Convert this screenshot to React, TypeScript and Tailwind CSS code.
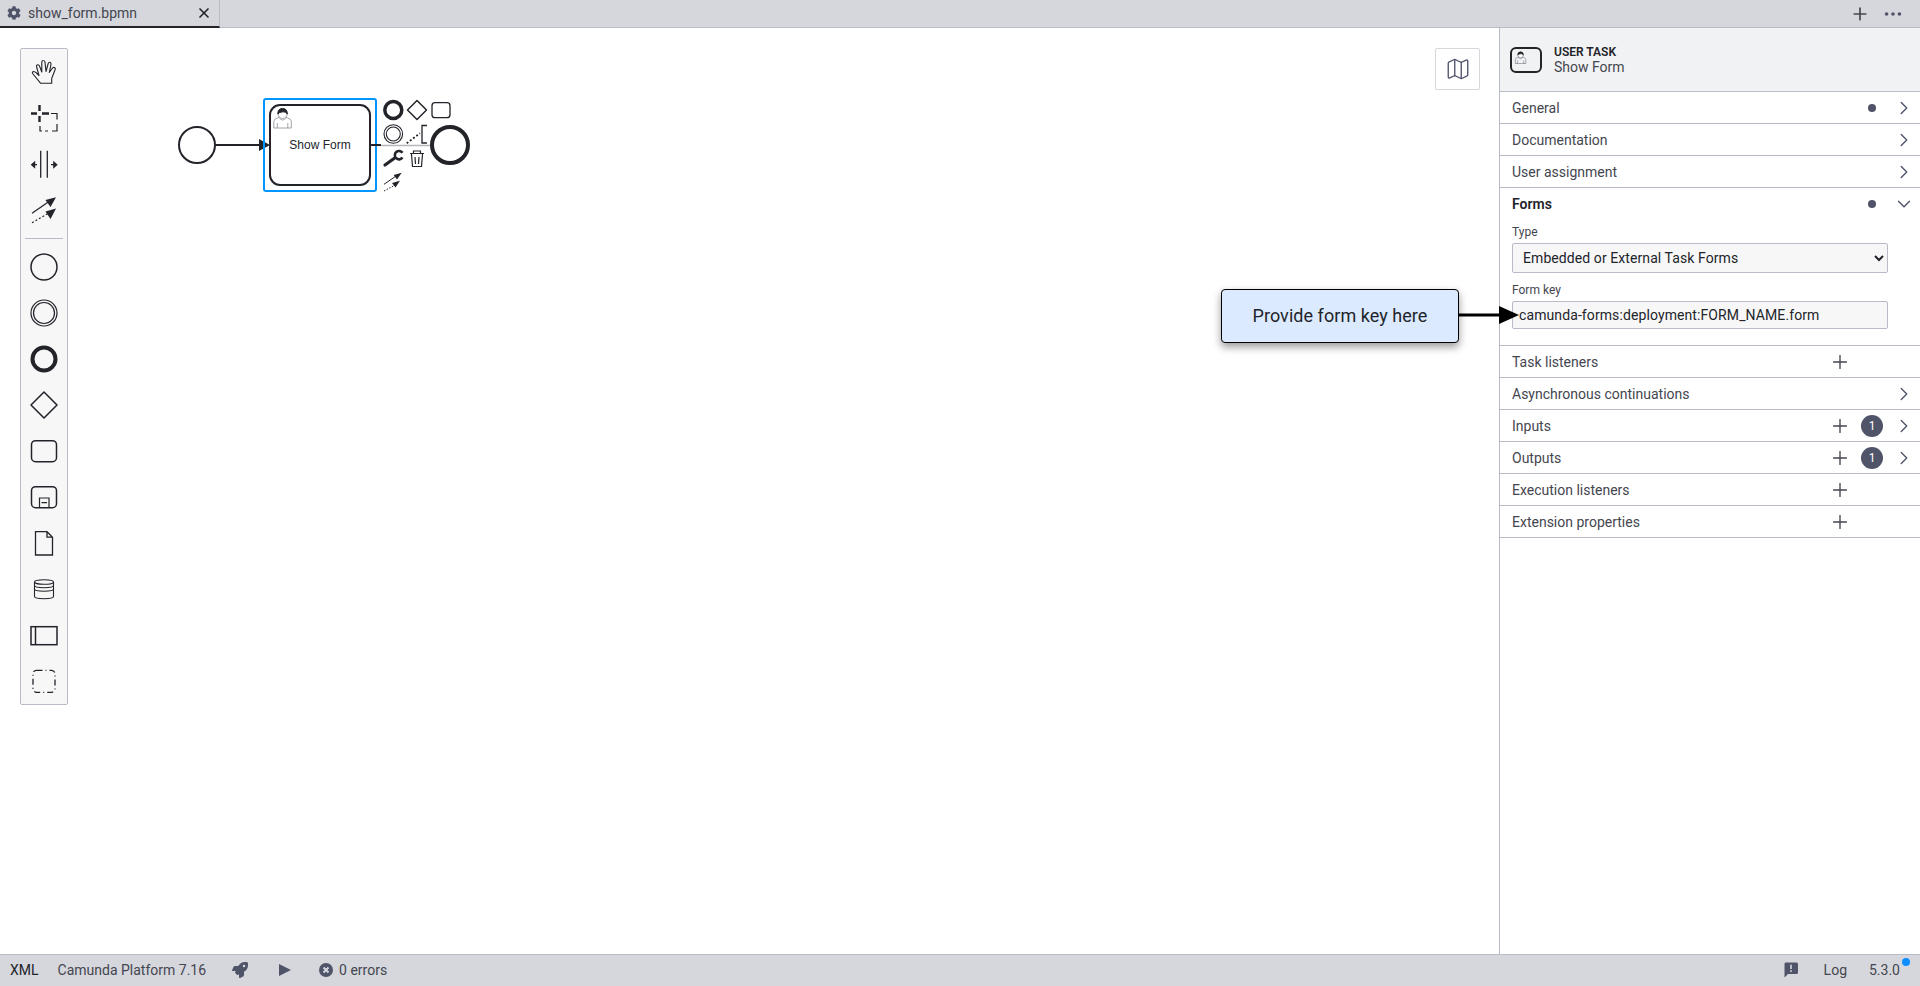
import React from "react";
import { ChevronDown, ChevronRight, Ellipsis, Map as MapIcon, Plus, X } from "lucide-react";
import { FaCog, FaRocket } from "react-icons/fa";

const stroke = "#22242a";

const Tool = ({ children }: { children: React.ReactNode }) => (
  <svg width="46" height="46" viewBox="0 0 46 46" fill="none" stroke={stroke} strokeWidth="1.5">
    {children}
  </svg>
);

const paletteTop = [
  <path
    key="hand"
    strokeWidth="1.1"
    strokeLinejoin="round"
    d="M19.7 34.3L12 25Q10.5 23 12.5 22.5Q14 22.5 15.5 24L18 26.5L15.5 17.5Q15.5 15.5 17 15.7Q18.3 16 18.7 17.5L20.8 23V13Q21 11.3 22.3 11.5Q23.7 11.5 24 13L25 22.5L27.2 14.5Q27.8 13 29 13.3Q30.2 13.8 30 15.3L28.3 23.5L31.5 19Q32.5 17.8 33.8 18.7Q34.8 19.5 34 21L30.7 29.5V34.3Z"
  />,
  <g key="lasso">
    <path strokeWidth="2.4" d="M18.5 10v6M18.5 21v6M10 18.5h6M21 18.5h7" />
    <path strokeWidth="1.2" d="M30 18.5h6v6M36 29v7h-5M27 36h-3M19 31v5h2" />
  </g>,
  <g key="space">
    <path strokeWidth="1.3" d="M19.7 9.7v27M26.3 9.7v27M11 23.7h5M30 23.7h5" />
    <path fill={stroke} stroke="none" d="M9.7 23.7l4.5-4v8zM36.7 23.7l-4.5-4v8z" />
  </g>,
  <g key="connect">
    <path strokeWidth="1.2" d="M11 26.3L28 14.5" />
    <path strokeWidth="1.2" strokeDasharray="2 2" d="M11 35.7L27 26.5" />
    <path fill={stroke} stroke="none" d="M35 10.3L24.5 13L29.5 20zM35 21.5L24.5 24.5L29.5 32z" />
  </g>,
];

const paletteBottom = [
  <circle key="start" cx="23" cy="23" r="13" />,
  <g key="intermediate" strokeWidth="1.2">
    <circle cx="23" cy="23" r="13" />
    <circle cx="23" cy="23" r="10.5" />
  </g>,
  <circle key="end" cx="23" cy="23" r="11.5" strokeWidth="4" />,
  <path key="gateway" strokeLinejoin="round" d="M23 10L36 23L23 36L10 23Z" />,
  <rect key="task" x="10.5" y="12.7" width="25" height="21" rx="4" />,
  <g key="subprocess">
    <rect x="10.5" y="12.7" width="25" height="21" rx="4" />
    <path strokeWidth="1.2" d="M18.5 33.5V24h9.5v9.5M20.5 28.7h5.5" />
  </g>,
  <path key="data" strokeWidth="1.3" d="M14.5 11.7h11.5l5.5 5.5V35h-17zM26 11.7v5.5h5.5" />,
  <g key="store" strokeWidth="1.1">
    <ellipse cx="23" cy="16" rx="9.5" ry="2.3" />
    <path d="M13.5 16v14.5c0 3 19 3 19 0V16M13.5 19.5c0 3 19 3 19 0M13.5 23c0 3 19 3 19 0" />
  </g>,
  <g key="participant" strokeWidth="1.5">
    <rect x="10" y="14.7" width="26" height="18" />
    <path d="M14.5 14.7v18" />
  </g>,
  <rect key="group" x="12" y="12.3" width="22" height="22" rx="3.5" strokeWidth="1.3" strokeDasharray="6 3 1 3" />,
];

const Palette = () => (
  <div className="absolute left-5 top-5 flex w-[48px] flex-col rounded-[2px] border border-[#b9bcc6] bg-[#f7f7f8]">
    {paletteTop.map((icon, i) => (
      <Tool key={i}>{icon}</Tool>
    ))}
    <div className="mx-1 my-[5px] h-px bg-[#b9bcc6]" />
    {paletteBottom.map((icon, i) => (
      <Tool key={i}>{icon}</Tool>
    ))}
  </div>
);

const UserGlyph = ({ x, y, scale, ink = "#8b8d94" }: { x: number; y: number; scale: number; ink?: string }) => (
  <g transform={`translate(${x} ${y}) scale(${scale})`} fill="none">
    <path stroke={ink} strokeWidth="0.8" d="M0.5 20V13.5Q0.5 11 4 10L6.5 9M18 20V13.5Q18 11 14.5 10L12 9M4 20V15M14.5 20V15M0.5 20H18M6 10Q9.3 14 12.5 10" />
    <circle cx="9.3" cy="6" r="4.5" fill="#fff" stroke={ink} strokeWidth="0.8" />
    <path fill="#22242a" d="M4.5 6Q4.5 0.5 9.3 0.5Q14 0.5 14 6Q12.5 3.5 9.5 3.8Q6 4 4.5 6Z" />
  </g>
);

const Diagram = () => (
  <svg className="absolute left-0 top-0" width="600" height="240" viewBox="0 28 600 240" fill="none" stroke={stroke}>
    <circle cx="197" cy="145" r="18" strokeWidth="2" />
    <path strokeWidth="2" d="M215 145H262" />
    <path fill={stroke} stroke="none" d="M270 145L259 139V151Z" />
    <rect x="264" y="99" width="112" height="92" rx="2" stroke="#0095ff" strokeWidth="2" />
    <rect x="270" y="105" width="100" height="80" rx="10" strokeWidth="2" />
    <UserGlyph x={273.3} y={108} scale={1} />
    <text x="320" y="149" textAnchor="middle" fill={stroke} stroke="none" className="font-['Liberation_Sans',sans-serif] text-[12px]">
      Show Form
    </text>
    <path strokeWidth="2" d="M370 145H381" />
    <path stroke="#b5b6ba" strokeWidth="1.5" d="M381 145.5H432" />
    <circle cx="450" cy="145" r="18" strokeWidth="4" />
    <circle cx="393.3" cy="110" r="8.5" strokeWidth="3.5" />
    <path strokeWidth="1.5" strokeLinejoin="round" d="M417 100.5L426.5 110L417 119.5L407.5 110Z" />
    <rect x="432" y="102.7" width="18" height="15" rx="3" strokeWidth="1.3" />
    <circle cx="393.3" cy="134" r="9.3" strokeWidth="1.1" />
    <circle cx="393.3" cy="134" r="7" strokeWidth="1.1" />
    <path strokeWidth="1.8" strokeDasharray="2 2" d="M406.7 143.3L420 133.3" />
    <path strokeWidth="1.3" d="M427 125.5H422V143H427" />
    <path strokeWidth="3.2" strokeLinecap="round" d="M385 165L394 158.5" />
    <path strokeWidth="2.6" d="M402.5 152.8A4.2 4.2 0 1 0 402.5 157.6" />
    <path strokeWidth="1.2" d="M410 153.5H424M413.5 153V151H420.5V153M411.5 154L412.5 166.5H421.5L422.5 154M415 157L415.5 164M419 157L418.5 164" />
    <path strokeWidth="1" d="M384 184.3L396 176" />
    <path strokeWidth="1" strokeDasharray="1.5 1.5" d="M384 191L395 185" />
    <path fill={stroke} stroke="none" d="M401.7 172.7L393.7 175L397 179.5ZM400 180.7L392 183L395.5 187.5Z" />
  </svg>
);

type RowProps = {
  title: string;
  plus?: boolean;
  dot?: boolean;
  badge?: boolean;
  chevron?: boolean;
};

const Row = ({ title, plus, dot, badge, chevron }: RowProps) => (
  <div className="flex h-8 items-center border-b border-[#b9bcc6] pl-3 text-[#44464f]">
    <span className="flex-1">{title}</span>
    <span className="flex w-8 justify-center">{plus && <Plus size={22} strokeWidth={1.5} className="text-[#44464f]" />}</span>
    <span className="flex w-8 justify-center">
      {dot && <span className="h-2 w-2 rounded-full bg-[#505469]" />}
      {badge && (
        <span className="flex h-[22px] w-[22px] items-center justify-center rounded-full bg-[#505469] text-xs text-white">1</span>
      )}
    </span>
    <span className="flex w-8 justify-center">{chevron && <ChevronRight size={22} strokeWidth={1.5} className="text-[#505469]" />}</span>
  </div>
);

const PropertiesPanel = () => (
  <div className="w-[421px] border-l border-[#b9bcc6] bg-white text-sm">
    <div className="flex h-16 items-center gap-3 border-b border-[#b9bcc6] bg-[#f1f2f3] pl-2.5">
      <svg width="32" height="26" viewBox="0 0 32 26" fill="none" stroke={stroke}>
        <rect x="1" y="1" width="30" height="24" rx="5" strokeWidth="2" />
        <UserGlyph x={5} y={4.5} scale={0.6} ink="#505469" />
      </svg>
      <div className="flex flex-col">
        <span className="text-xs leading-[14px] font-semibold text-[#22242a]">USER TASK</span>
        <span className="leading-4 text-[#44464f]">Show Form</span>
      </div>
    </div>
    <Row title="General" dot chevron />
    <Row title="Documentation" chevron />
    <Row title="User assignment" chevron />
    <div className="border-b border-[#b9bcc6] pb-4">
      <div className="flex h-8 items-center pl-3">
        <span className="flex-1 font-semibold text-[#22242a]">Forms</span>
        <span className="flex w-8 justify-center">
          <span className="h-2 w-2 rounded-full bg-[#505469]" />
        </span>
        <span className="flex w-8 justify-center">
          <ChevronDown size={22} strokeWidth={1.5} className="text-[#505469]" />
        </span>
      </div>
      <div className="mt-1 flex flex-col pr-8 pl-3 text-[#22242a]">
        <label className="text-xs leading-4 text-[#44464f]">Type</label>
        <select className="mt-[3px] h-[30px] rounded-[2px] border border-[#b9bcc6] bg-[#f7f7f8] pl-1.5 text-sm tracking-[0.08px]">
          <option>Embedded or External Task Forms</option>
        </select>
        <label className="mt-[9px] text-xs leading-4 text-[#44464f]">Form key</label>
        <input
          readOnly
          value="camunda-forms:deployment:FORM_NAME.form"
          className="mt-[3px] h-[28px] rounded-[2px] border border-[#b9bcc6] bg-[#f7f7f8] pl-1.5 text-sm tracking-[0.1px]"
        />
      </div>
    </div>
    <Row title="Task listeners" plus />
    <Row title="Asynchronous continuations" chevron />
    <Row title="Inputs" plus badge chevron />
    <Row title="Outputs" plus badge chevron />
    <Row title="Execution listeners" plus />
    <Row title="Extension properties" plus />
  </div>
);

export default function App() {
  return (
    <div className="flex h-screen flex-col overflow-hidden bg-white font-[Roboto,sans-serif] text-sm text-[#22242a]">
      <div className="flex h-7 items-stretch border-b border-[#b9bcc6] bg-[#d5d7dd]">
        <div className="flex h-7 w-[220px] items-center border-r border-b-2 border-r-[#b9bcc6] border-b-[#22242a] pl-[7px] text-[#44464f]">
          <FaCog size={14} className="mr-[7px] text-[#505469]" />
          <span className="flex-1">show_form.bpmn</span>
          <X size={16} strokeWidth={2.5} className="mr-[7px] text-[#22242a]" />
        </div>
        <div className="flex-1" />
        <div className="flex items-center">
          <Plus size={20} strokeWidth={2} className="mr-[12px] text-[#44464f]" />
          <Ellipsis size={22} strokeWidth={2} className="mr-4 text-[#505469]" />
        </div>
      </div>

      <div className="relative flex min-h-0 flex-1">
        <div className="relative flex-1">
          <Diagram />
          <Palette />
          <button className="absolute right-[19px] top-5 flex h-[42px] w-[45px] items-center justify-center rounded-[2px] border border-[#d5d7dd] bg-white text-[#505469]">
            <MapIcon size={26} strokeWidth={1.25} />
          </button>
        </div>
        <PropertiesPanel />

        <div className="absolute left-[1221px] top-[261px] flex h-[54px] w-[238px] items-center justify-center rounded border border-black bg-[#dbeafe] text-lg tracking-[0.05px] shadow-[0_4px_8px_rgba(0,0,0,0.4)]">
          Provide form key here
        </div>
        <svg className="absolute left-[1459px] top-[276px]" width="62" height="22" viewBox="0 0 62 22">
          <path stroke="#000" strokeWidth="3" d="M0 11H44" />
          <path d="M40 2L60 11L40 20Z" />
        </svg>
      </div>

      <div className="flex h-8 items-center border-t border-[#b9bcc6] bg-[#d5d7dd] pb-0.5 text-[#44464f]">
        <span className="ml-2.5 text-[#22242a]">XML</span>
        <span className="ml-[19px]">Camunda Platform 7.16</span>
        <FaRocket size={16} className="ml-[26px] text-[#505469]" />
        <svg className="ml-[30px]" width="14" height="14" viewBox="0 0 14 14">
          <path fill="#505469" d="M1 1L13 7L1 13Z" />
        </svg>
        <svg className="ml-[27px]" width="14" height="14" viewBox="0 0 14 14">
          <circle cx="7" cy="7" r="7" fill="#505469" />
          <path stroke="#d5d7dd" strokeWidth="2" d="M4.5 4.5L9.5 9.5M9.5 4.5L4.5 9.5" />
        </svg>
        <span className="ml-[6px]">0 errors</span>
        <div className="flex-1" />
        <svg width="14" height="16" viewBox="0 0 14 16">
          <path fill="#505469" d="M1.5 0.5H12.5Q14 0.5 14 2V10.5Q14 12 12.5 12H4L0.5 15.5V2Q0.5 0.5 1.5 0.5Z" />
          <path stroke="#d5d7dd" strokeWidth="1.6" d="M7 2.8V7M7 8.2V10" />
        </svg>
        <span className="ml-[26px]">Log</span>
        <span className="relative ml-[22px] mr-5">
          5.3.0
          <span className="absolute -right-2.5 -top-0.5 h-2 w-2 rounded-full bg-[#0d8fff]" />
        </span>
      </div>
    </div>
  );
}
